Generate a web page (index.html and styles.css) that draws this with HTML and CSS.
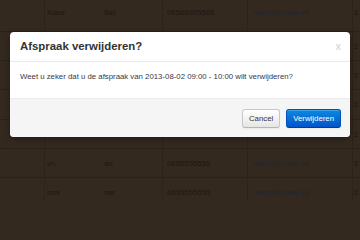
FILE: index.html
```html
<!DOCTYPE html>
<html lang="nl">
<head>
<meta charset="utf-8">
<title>Afspraak verwijderen</title>
<link rel="stylesheet" href="styles.css">
</head>
<body>
<div class="page">
  <div class="table">
    <div class="row first">
      <div class="c c0"></div><div class="c c1">Klare</div><div class="c c2">Bel</div><div class="c c3">06568995566</div><div class="c c4"><span class="link">mano@home.nl</span></div><div class="c c5">2</div>
    </div>
    <div class="row"><div class="c c0"></div><div class="c c1"></div><div class="c c2"></div><div class="c c3"></div><div class="c c4"></div><div class="c c5">2</div></div>
    <div class="row"><div class="c c0"></div><div class="c c1"></div><div class="c c2"></div><div class="c c3"></div><div class="c c4"></div><div class="c c5">2</div></div>
    <div class="row"><div class="c c0"></div><div class="c c1"></div><div class="c c2"></div><div class="c c3"></div><div class="c c4"></div><div class="c c5">2</div></div>
    <div class="row"><div class="c c0"></div><div class="c c1"></div><div class="c c2"></div><div class="c c3"></div><div class="c c4"></div><div class="c c5">2</div></div>
    <div class="row">
      <div class="c c0"></div><div class="c c1">vn</div><div class="c c2">an</div><div class="c c3">0655555555</div><div class="c c4"><span class="link">mano@home.nl</span></div><div class="c c5">2</div>
    </div>
    <div class="row">
      <div class="c c0"></div><div class="c c1">moi</div><div class="c c2">me</div><div class="c c3">0655555555</div><div class="c c4"><span class="link">mano@home.nl</span></div><div class="c c5">2</div>
    </div>
  </div>

  <div class="modal">
    <div class="modal-header">
      <h3 class="modal-title">Afspraak verwijderen?</h3>
      <span class="close">x</span>
    </div>
    <div class="modal-body">Weet u zeker dat u de afspraak van 2013-08-02 09:00 - 10:00 wilt verwijderen?</div>
    <div class="modal-footer">
      <button class="btn">Cancel</button>
      <button class="btn btn-primary">Verwijderen</button>
    </div>
  </div>
</div>
</body>
</html>
```

FILE: styles.css
```css
html, body {
  margin: 0;
  padding: 0;
  background: #33291f;
}
body {
  font-family: "Liberation Sans", Arial, sans-serif;
  width: 360px;
  height: 200px;
  overflow: hidden;
}
.page {
  position: relative;
  width: 360px;
  height: 200px;
  overflow: hidden;
}
.table {
  display: flex;
  flex-direction: column;
  margin-top: -2px;
}
.row {
  display: flex;
  height: 29.2px;
  box-sizing: border-box;
  border-top: 1px solid #2a2119;
  font-size: 7.8px;
  color: #1e1812;
}
.row.first {
  border-top: none;
  height: 33px;
}
.c {
  box-sizing: border-box;
  padding-top: 10px;
  line-height: 10px;
  white-space: nowrap;
}
.row.first .c { padding-top: 10px; }
.c0 { width: 45px; border-right: 1px solid #2c2319; }
.c1 { width: 56px; padding-left: 2px; }
.c2 { width: 62px; padding-left: 3px; border-right: 1px solid #2c2319; }
.c3 { width: 85px; padding-left: 4px; border-right: 1px solid #2c2319; }
.c4 { width: 105px; padding-left: 5px; border-right: 1px solid #2c2319; }
.c5 { flex: 1; padding-left: 1px; }
.link { color: #1c2733; }

.modal {
  position: absolute;
  left: 10px;
  top: 32px;
  width: 340px;
  height: 105px;
  background: #fff;
  border-radius: 4px;
  box-shadow: 0 2px 6px rgba(0, 0, 0, 0.35);
  display: flex;
  flex-direction: column;
  overflow: hidden;
}
.modal-header {
  height: 30px;
  box-sizing: border-box;
  border-bottom: 1px solid #eaeaea;
  display: flex;
  align-items: center;
  justify-content: space-between;
  padding: 0 9px 2px 10px;
}
.modal-title {
  margin: 0;
  font-size: 11.4px;
  font-weight: bold;
  color: #333;
  line-height: 14px;
}
.close {
  font-size: 11px;
  color: #cfcfcf;
  line-height: 12px;
}
.modal-body {
  height: 36px;
  box-sizing: border-box;
  padding: 10px 10px 0 10px;
  font-size: 7.8px;
  line-height: 10px;
  color: #3a3744;
}
.modal-footer {
  flex: 1;
  background: #f5f5f5;
  border-top: 1px solid #ececec;
  display: flex;
  justify-content: flex-end;
  align-items: flex-start;
  gap: 6px;
  padding: 10px 9px 0 0;
}
.btn {
  height: 19px;
  box-sizing: border-box;
  padding: 0 6px;
  font-family: "Liberation Sans", Arial, sans-serif;
  font-size: 7.8px;
  line-height: 17px;
  color: #333;
  border: 1px solid #c8c8c8;
  border-bottom-color: #b5b5b5;
  border-radius: 3px;
  background: linear-gradient(#ffffff, #e6e6e6);
  box-shadow: inset 0 1px 0 rgba(255, 255, 255, 0.2), 0 1px 2px rgba(0, 0, 0, 0.05);
}
.btn-primary {
  color: #fff;
  border-color: #0050b8;
  border-bottom-color: #003c99;
  background: linear-gradient(#0a8ae0, #0453c9);
}
```
